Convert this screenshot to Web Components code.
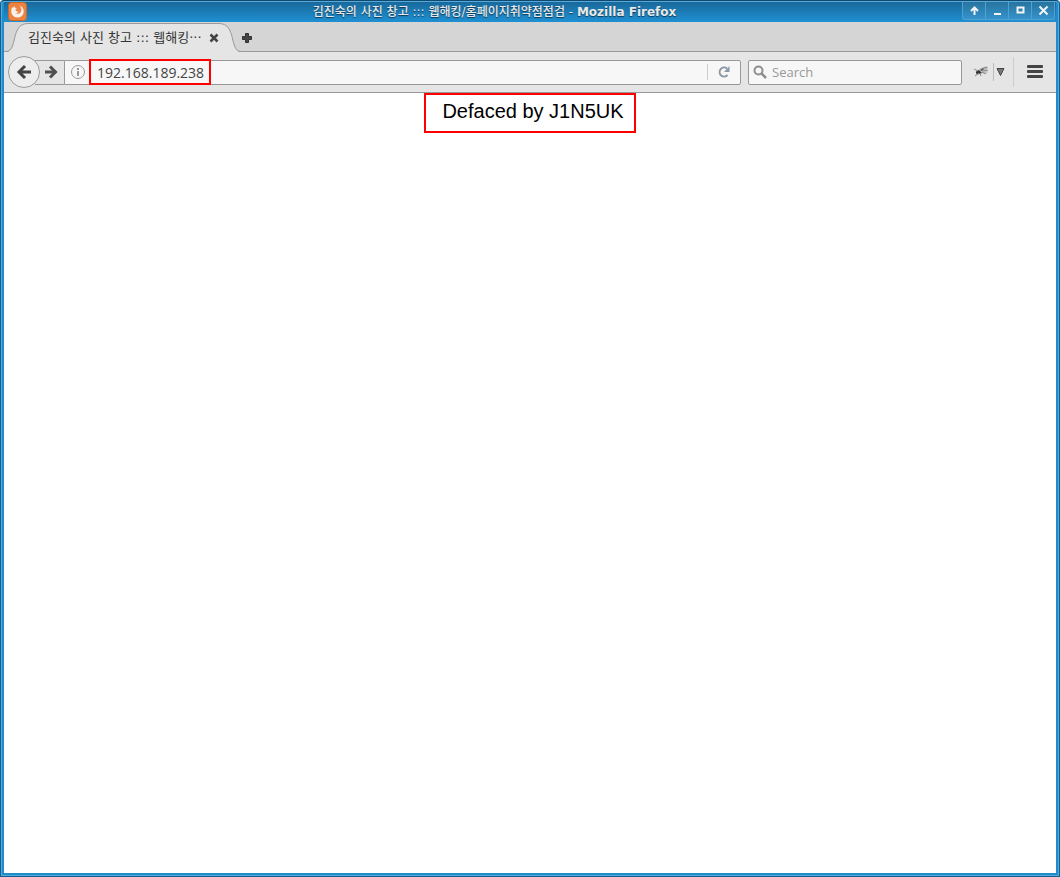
<!DOCTYPE html>
<html lang="ko">
<head>
<meta charset="utf-8">
<title>김진숙의 사진 창고 ::: 웹해킹/홈페이지취약점점검</title>
<style>
  html, body {
    height: 100%;
    margin: 0;
  }
  body {
    font-family: "Open Sans", "Noto Sans CJK KR", sans-serif;
    font-size: 13px;
    color: #333;
  }
</style>
</head>
<body>
<browser-window>
  <title-bar slot="title">김진숙의 사진 창고 ::: 웹해킹/홈페이지취약점점검 - <b slot="app">Mozilla Firefox</b></title-bar>
  <tab-strip slot="tabs">
    <browser-tab>김진숙의 사진 창고 ::: 웹해킹···</browser-tab>
  </tab-strip>
  <nav-bar slot="nav" address="192.168.189.238"></nav-bar>
  <defaced-page>Defaced by J1N5UK</defaced-page>
</browser-window>

<script>
  // <browser-window>: the frame, with a slot for each bar
  class BrowserWindow extends HTMLElement {
    constructor() {
      super();
      this.attachShadow({ mode: "open" });
      this.shadowRoot.innerHTML = `
        <style>
          :host {
            display: flex;
            flex-direction: column;
            box-sizing: border-box;
            min-height: 100vh;
            border: 1px solid #11608f;
            border-top-color: #10496c;
            border-radius: 4px 4px 0 0;
            background: #1f8ccc;
            box-shadow: inset 0 0 0 1px #58a9db;
            padding: 1px 3px 3px;
          }
          main {
            flex: 1;
            background: white;
          }
        </style>
        <slot name="title"></slot>
        <slot name="tabs"></slot>
        <slot name="nav"></slot>
        <main><slot></slot></main>
      `;
    }
  }

  class TitleBar extends HTMLElement {
    constructor() {
      super();
      this.attachShadow({ mode: "open" });
      this.shadowRoot.innerHTML = `
        <style>
          :host {
            display: flex;
            height: 20px;
            padding: 0 1px 0 4px;
            background: linear-gradient(#19699b, #1f90d2);
            color: #e8e8e8;
            font: 500 12px/21px "DejaVu Sans", "Noto Sans CJK KR", sans-serif;
            text-shadow: 0 1px 1px #0b3a58;
          }
          h1 {
            flex: 1;
            margin: 0;
            font: inherit;
            text-align: center;
            white-space: nowrap;
            overflow: hidden;
          }
          .controls {
            display: flex;
          }
          button {
            box-sizing: border-box;
            width: 23px;
            height: 18px;
            padding: 0;
            border: 1px solid #4fa1d2;
            border-top: 0;
            border-left-width: 0;
            background: linear-gradient(#27749f, #3592cb);
          }
          button:first-child {
            width: 24px;
            border-left-width: 1px;
            border-bottom-left-radius: 3px;
          }
          button:last-child {
            border-bottom-right-radius: 3px;
          }
          svg {
            display: block;
            margin: auto;
          }
          .logo {
            margin: 0;
          }
        </style>
        <svg class="logo" width="19" height="19">
          <rect x=".5" y=".5" width="18" height="18" rx="3" fill="#ec8340" stroke="#c9682c"/>
          <path d="M4 5.500C2 10 4 15.500 9.500 15.500c6 0 8-6.500 4.500-10.500l-2.500-1.500c2 2 2.500 5 1 7-1.500 1.500-3.500 1.500-5 .5 1.500 0 2.500-.500 3-1.500-2 0-3-.500-3-2l1.500-1C7.500 6.500 6.500 5.500 6.500 4L5.500 5.500z" fill="#f6f1ea"/>
        </svg>
        <h1><slot></slot><slot name="app"></slot></h1>
        <div class="controls">
          <button aria-label="Shade"><svg width="11" height="11" fill="none" stroke="#f3f3f3" stroke-width="2"><path d="M5.500 10V2M2 6l3.500-3.500L9 6"/></svg></button>
          <button aria-label="Minimize"><svg width="11" height="11"><path d="M2 8h7v2H2z" fill="#f3f3f3"/></svg></button>
          <button aria-label="Maximize"><svg width="11" height="11"><path d="M1.500 1.500h8v7h-8zM3.500 3.500h4v3h-4z" fill="#f3f3f3" fill-rule="evenodd"/></svg></button>
          <button aria-label="Close"><svg width="11" height="11"><path d="M1.500 1.500l8 8M9.500 1.500l-8 8" stroke="#f3f3f3" stroke-width="2"/></svg></button>
        </div>
      `;
    }
  }

  class TabStrip extends HTMLElement {
    constructor() {
      super();
      this.attachShadow({ mode: "open" });
      this.shadowRoot.innerHTML = `
        <style>
          :host {
            display: flex;
            align-items: center;
            height: 29px;
            border-bottom: 1px solid #999;
            background: #d5d5d5;
          }
          button {
            padding: 2px 0 0;
            border: 0;
            background: none;
          }
          svg {
            display: block;
          }
        </style>
        <slot></slot>
        <button aria-label="New tab"><svg width="12" height="12"><path d="M4.500 1.500h3v3h3v3h-3v3h-3v-3h-3v-3h3z" fill="#444" stroke="#333"/></svg></button>
      `;
    }
  }

  // <browser-tab>: curved edges on both sides of a label
  class BrowserTab extends HTMLElement {
    constructor() {
      super();
      this.attachShadow({ mode: "open" });
      this.shadowRoot.innerHTML = `
        <style>
          :host {
            display: flex;
            align-self: flex-end;
            height: 29px;
            margin-bottom: -1px;
            padding-left: 2px;
          }
          .body {
            display: flex;
            align-items: center;
            box-sizing: border-box;
            width: 191px;
            border-top: 1px solid #999;
            background: #e5e5e5;
          }
          .label {
            flex: 1;
            font-family: "DejaVu Sans", "Noto Sans CJK KR", sans-serif;
            line-height: 26px;
            white-space: nowrap;
          }
          button {
            padding: 0;
            border: 0;
            background: none;
          }
          svg {
            display: block;
          }
        </style>
        <svg width="22" height="29"><path d="M0 29C12 29 4 .5 22 .5V29z" fill="#e5e5e5"/><path d="M0 28.500C12 28.500 4 .5 22 .5" fill="none" stroke="#999"/></svg>
        <div class="body">
          <span class="label"><slot></slot></span>
          <button aria-label="Close tab"><svg width="10" height="10"><path d="M1.500 1.500l7 7M8.500 1.500l-7 7" stroke="#444" stroke-width="2.500"/></svg></button>
        </div>
        <svg width="22" height="29"><path d="M22 29C10 29 18 .5 0 .5V29z" fill="#e5e5e5"/><path d="M22 28.500C10 28.500 18 .5 0 .5" fill="none" stroke="#999"/></svg>
      `;
    }
  }

  class NavBar extends HTMLElement {
    constructor() {
      super();
      this.attachShadow({ mode: "open" });
      this.shadowRoot.innerHTML = `
        <style>
          :host {
            display: flex;
            align-items: center;
            height: 40px;
            padding: 0 7px 0 4px;
            border-bottom: 1px solid #999;
            background: #e5e5e5;
          }
          button {
            display: flex;
            align-items: center;
            justify-content: center;
            box-sizing: border-box;
            flex: none;
            padding: 0;
            border: 0;
            background: none;
          }
          svg {
            display: block;
            flex: none;
          }
          .back {
            z-index: 1;
            width: 32px;
            height: 32px;
            border: 1px solid #999;
            border-radius: 50%;
            background: #ededed;
          }
          .forward {
            width: 29px;
            height: 25px;
            margin-left: -5px;
            padding-left: 3px;
            border: 1px solid #999;
            border-width: 1px 0;
          }
          .field {
            display: flex;
            align-items: center;
            box-sizing: border-box;
            height: 25px;
            border: 1px solid #999;
            border-radius: 2px;
            background: #f7f7f7;
          }
          .url {
            flex: 1;
            border-radius: 0 2px 2px 0;
          }
          .info {
            width: 24px;
            padding-left: 2px;
          }
          input {
            box-sizing: border-box;
            min-width: 0;
            padding: 0;
            border: 0;
            outline: 0;
            background: none;
            font: inherit;
            color: #444;
          }
          .address {
            width: 122px;
            height: 26px;
            padding-left: 6px;
            border: 2px solid #f00;
            font-size: 14px;
          }
          .reload {
            width: 33px;
            height: 16px;
            margin-left: auto;
            border-left: 1px solid #ccc;
          }
          .search {
            width: 214px;
            margin-left: 7px;
            padding-left: 4px;
          }
          .search input {
            flex: 1;
            margin-left: 5px;
          }
          .search input::placeholder {
            color: #999;
            opacity: 1;
          }
          .addon {
            width: 18px;
            margin-left: 11px;
          }
          .drop {
            width: 14px;
            height: 18px;
            margin-left: 2px;
            border-left: 1px solid #bbb;
          }
          .menu {
            width: 36px;
            height: 30px;
            margin-left: 6px;
            padding-left: 6px;
            border-left: 1px solid #ccc;
          }
        </style>
        <button class="back" aria-label="Back"><svg width="16" height="16" fill="none" stroke="#444" stroke-width="3"><path d="M15 8H4M9 2L3 8l6 6"/></svg></button>
        <button class="forward" aria-label="Forward"><svg width="14" height="14" fill="none" stroke="#505050" stroke-width="3"><path d="M1 7h10M6 1.500L11.500 7 6 12.500"/></svg></button>
        <div class="field url">
          <button class="info" aria-label="Site information"><svg width="14" height="14"><circle cx="7" cy="7" r="6.500" fill="none" stroke="#999"/><path d="M6 3h2v2H6zM6 6h2v5H6z" fill="#999"/></svg></button>
          <input class="address" aria-label="Address">
          <button class="reload" aria-label="Reload"><svg width="12" height="12"><path d="M9.500 9A4.500 4.500 0 1 1 9 2.500" fill="none" stroke="#8c98a5" stroke-width="2"/><path d="M11.500 0v6H6z" fill="#8c98a5"/></svg></button>
        </div>
        <div class="field search">
          <svg width="14" height="14" fill="none" stroke="#8e8e8e"><circle cx="5.500" cy="5.500" r="4" stroke-width="2"/><path d="M8.500 8.500l4.500 4.500" stroke-width="2.500"/></svg>
          <input aria-label="Search" placeholder="Search">
        </div>
        <button class="addon" aria-label="Add-on">
          <svg width="18" height="14">
            <path d="M5 5c3-3 7-4 10-3 0 2-3 4-8 5z" fill="#bbb"/>
            <path d="M9 6c3-1 6 0 6 1-1 2-4 2-7 1z" fill="#c4c4c4"/>
            <path d="M3 7c1-2 3-2 4-1l2 2-3 1c-2 1-3 0-3-2z" fill="#333"/>
            <path d="M7 5l3-2 1 1-2 2z" fill="#555"/>
            <path d="M1 4l4 2M2 11l4-3M7 8l1 3M9 7l4 2M11 3l3-1M10 6l5-1" fill="none" stroke="#888"/>
          </svg>
        </button>
        <button class="drop" aria-label="Add-on options"><svg width="9" height="8"><path d="M1 .5h7l-3.500 7z" fill="#777" stroke="#444"/></svg></button>
        <button class="menu" aria-label="Open menu"><svg width="16" height="14"><g fill="#444"><rect width="16" height="3" rx="1"/><rect y="5" width="16" height="3" rx="1"/><rect y="10" width="16" height="3" rx="1"/></g></svg></button>
      `;
    }
    connectedCallback() {
      this.shadowRoot.querySelector(".address").value = this.getAttribute("address");
    }
  }

  class DefacedPage extends HTMLElement {
    constructor() {
      super();
      this.attachShadow({ mode: "open" });
      this.shadowRoot.innerHTML = `
        <style>
          :host {
            display: flex;
            justify-content: center;
            color: black;
            font: 20px/32px "Liberation Sans", sans-serif;
          }
          p {
            margin: 0;
            padding: 0 10px 4px 16px;
            border: 2px solid #f00;
          }
        </style>
        <p><slot></slot></p>
      `;
    }
  }

  customElements.define("browser-window", BrowserWindow);
  customElements.define("title-bar", TitleBar);
  customElements.define("tab-strip", TabStrip);
  customElements.define("browser-tab", BrowserTab);
  customElements.define("nav-bar", NavBar);
  customElements.define("defaced-page", DefacedPage);
</script>
</body>
</html>
